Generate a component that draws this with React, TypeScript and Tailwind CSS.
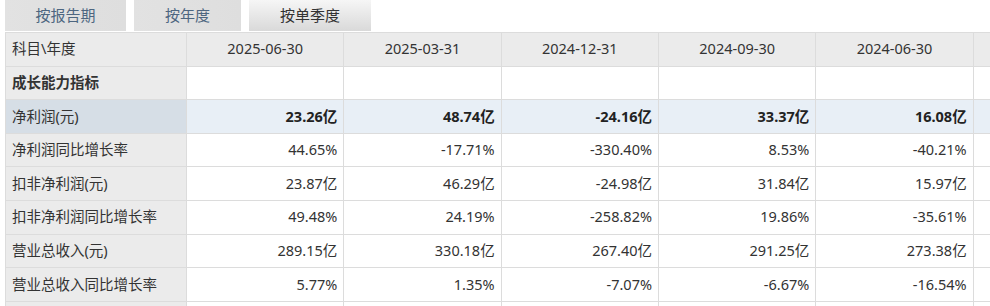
import React from 'react'

const tabs = [
  { label: '按报告期', width: 'w-[121px]', active: false },
  { label: '按年度', width: 'w-[107px]', active: false },
  { label: '按单季度', width: 'w-[122px]', active: true },
]

// last column only peeks in at the right edge, so its text stays empty
const dates = ['2025-06-30', '2025-03-31', '2024-12-31', '2024-09-30', '2024-06-30', '']

type Row = { label: string; values: string[]; kind?: 'section' | 'highlight' }

const rows: Row[] = [
  { label: '成长能力指标', values: ['', '', '', '', '', ''], kind: 'section' },
  { label: '净利润(元)', values: ['23.26亿', '48.74亿', '-24.16亿', '33.37亿', '16.08亿', ''], kind: 'highlight' },
  { label: '净利润同比增长率', values: ['44.65%', '-17.71%', '-330.40%', '8.53%', '-40.21%', ''] },
  { label: '扣非净利润(元)', values: ['23.87亿', '46.29亿', '-24.98亿', '31.84亿', '15.97亿', ''] },
  { label: '扣非净利润同比增长率', values: ['49.48%', '24.19%', '-258.82%', '19.86%', '-35.61%', ''] },
  { label: '营业总收入(元)', values: ['289.15亿', '330.18亿', '267.40亿', '291.25亿', '273.38亿', ''] },
  { label: '营业总收入同比增长率', values: ['5.77%', '1.35%', '-7.07%', '-6.67%', '-16.54%', ''] },
  { label: '', values: ['', '', '', '', '', ''] },
]

const font = { fontFamily: '"Noto Sans", "Noto Sans CJK SC", sans-serif' }

export default function App() {
  return (
    <div className="w-[990px] h-[306px] overflow-hidden bg-white text-[#333] text-[14.5px]" style={font}>
      {/* tabs */}
      <div className="flex gap-[8px] pl-[5px] h-[32px]">
        {tabs.map(tab => (
          <div
            key={tab.label}
            className={`${tab.width} h-[31px] flex items-center justify-center text-[15px] ${
              tab.active
                ? 'bg-gradient-to-b from-[#f6f6f6] to-[#d9d9d9] text-[#333]'
                : 'bg-gradient-to-r from-[#e2e2e2] to-[#dedede] text-[#4d6680]'
            }`}
          >
            {tab.label}
          </div>
        ))}
      </div>

      {/* table */}
      <div className="ml-[5px] w-[1130px] border-t border-l border-[#dcdcdc]">
        <div className="flex h-[33.6px] bg-[#ebebeb]">
          <div className="w-[181px] shrink-0 border-r border-b border-[#dcdcdc] flex items-center pl-[6px]">科目\年度</div>
          {dates.map((d, i) => (
            <div key={i} className="w-[157.33px] shrink-0 border-r border-b border-[#dcdcdc] flex items-center justify-center">
              {d}
            </div>
          ))}
        </div>
        {rows.map((row, r) => (
          <div key={r} className={`flex h-[33.6px] ${row.kind === 'highlight' ? 'bg-[#e8eff6] font-bold text-[#222]' : 'bg-white'}`}>
            <div
              className={`w-[181px] shrink-0 border-r border-b border-[#dcdcdc] flex items-center pl-[6px] ${
                row.kind === 'highlight' ? 'bg-[#d6dee6] font-normal text-[#333]' : 'bg-[#ebebeb]'
              } ${row.kind === 'section' ? 'font-bold' : ''}`}
            >
              {row.label}
            </div>
            {row.values.map((v, i) => (
              <div key={i} className="w-[157.33px] shrink-0 border-r border-b border-[#dcdcdc] flex items-center justify-end pr-[6px]">
                {v}
              </div>
            ))}
          </div>
        ))}
      </div>
    </div>
  )
}
